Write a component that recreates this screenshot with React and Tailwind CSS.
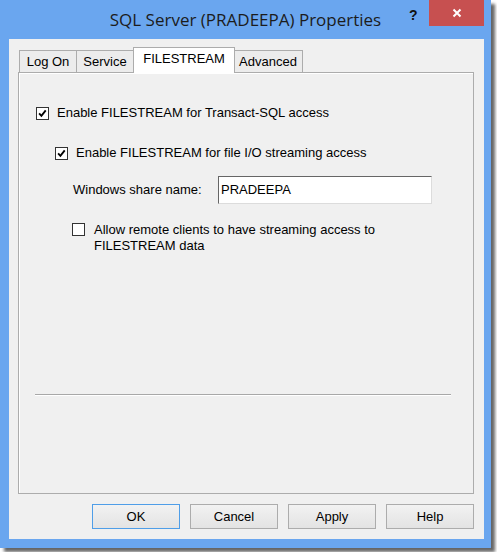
import React from 'react';

const Check = () => (
  <svg width="13" height="13" viewBox="0 0 13 13" className="block">
    <path d="M2.5 6.3 L5.2 9.2 L10.3 2.8" fill="none" stroke="#000" strokeWidth="2.2" />
  </svg>
);

const CheckBox = ({ checked }) => (
  <div className="w-[13px] h-[13px] shrink-0 border border-[#333] bg-white flex items-center justify-center">
    {checked && <Check />}
  </div>
);

const Tab = ({ label, active, width }) =>
  active ? (
    <div
      className={`${width} h-[26px] -mx-px -mb-px relative z-10 bg-white border border-b-0 border-[#acacac] flex items-center justify-center pb-[3px]`}
    >
      {label}
    </div>
  ) : (
    <div
      className={`${width} h-[22px] bg-[#ececec] border border-b-0 border-[#acacac] -ml-px first:ml-0 flex items-center justify-center pt-[1px]`}
    >
      {label}
    </div>
  );

const Button = ({ children, focused }) => (
  <button
    className={`w-[88px] h-[25px] border ${
      focused ? 'border-[#4f9ee8]' : 'border-[#acacac]'
    } bg-gradient-to-b from-[#f2f2f2] to-[#e3e3e3] text-[13px] text-black`}
  >
    {children}
  </button>
);

export default function App() {
  return (
    <div className="w-[497px] h-[552px] bg-white font-['Liberation_Sans',Arial,sans-serif] text-[13px] text-black">
      <div className="w-[491px] h-[548px] bg-[#6aa6ef] flex flex-col shadow-[4px_4px_3px_rgba(0,0,0,0.6)]">
        {/* title bar */}
        <div className="h-[39px] relative flex justify-center pt-[9px]">
          <span className="font-['Open_Sans',sans-serif] text-[17px] text-[#1c1c1c] leading-[21px]">
            SQL Server (PRADEEPA) Properties
          </span>
          <span className="absolute left-[409px] top-[5px] font-bold text-[14px] text-[#111]">?</span>
          <div className="absolute right-[7px] top-0 w-[55px] h-[26px] bg-[#c75050] flex items-center justify-center">
            <svg width="10" height="10" viewBox="0 0 10 10">
              <path d="M1.5 1.5 L8.5 8.5 M8.5 1.5 L1.5 8.5" stroke="#fff" strokeWidth="2" />
            </svg>
          </div>
        </div>

        {/* client area */}
        <div className="ml-[9px] mr-[7px] mb-[9px] flex-1 bg-[#f0f0f0] flex flex-col">
          <div className="flex items-end ml-[10px] mt-[8px]">
            <Tab label="Log On" width="w-[58px]" />
            <Tab label="Service" width="w-[58px]" />
            <Tab label="FILESTREAM" width="w-[102px]" active />
            <Tab label="Advanced" width="w-[70px]" />
          </div>

          <div className="ml-[9px] w-[456px] h-[422px] border border-[#acacac] shadow-[inset_1px_1px_0_#fff] flex flex-col">
            <div className="mt-[32px] ml-[17px] h-[16px] flex items-center gap-[8px]">
              <CheckBox checked />
              <span>Enable FILESTREAM for Transact-SQL access</span>
            </div>

            <div className="mt-[24px] ml-[36px] h-[16px] flex items-center gap-[8px]">
              <CheckBox checked />
              <span>Enable FILESTREAM for file I/O streaming access</span>
            </div>

            <div className="mt-[15px] ml-[54px] h-[28px] flex items-center">
              <span className="w-[145px]">Windows share name:</span>
              <div className="w-[214px] h-[28px] bg-white border border-[#dcdcdc] border-t-[#666] border-l-[#666] flex items-center pl-[2px]">
                PRADEEPA
              </div>
            </div>

            <div className="mt-[19px] ml-[53px] flex items-start gap-[9px]">
              <CheckBox />
              <span className="leading-[16px] -mt-[1px]">
                Allow remote clients to have streaming access to
                <br />
                FILESTREAM data
              </span>
            </div>

            <div className="mt-[140px] ml-[16px] w-[416px] h-[2px] border-t border-[#a8a8a8] border-b border-b-white" />
          </div>

          <div className="mt-[10px] mr-[10px] flex justify-end gap-[10px]">
            <Button focused>OK</Button>
            <Button>Cancel</Button>
            <Button>Apply</Button>
            <Button>Help</Button>
          </div>
        </div>
      </div>
    </div>
  );
}
